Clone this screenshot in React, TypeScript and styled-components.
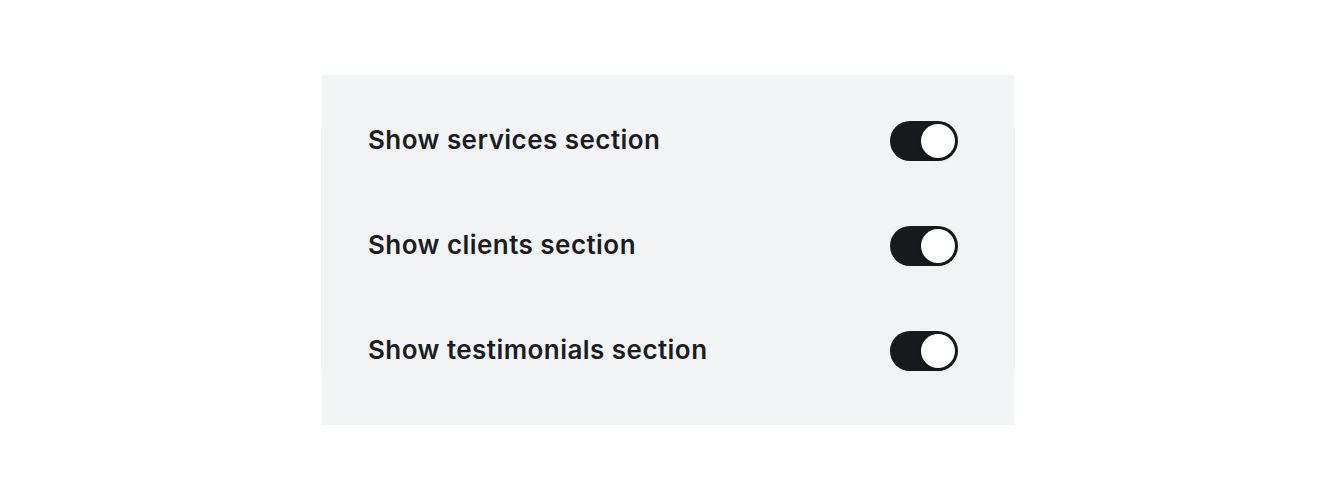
import React, { useState } from 'react'
import styled, { createGlobalStyle } from 'styled-components';

const GlobalStyle = createGlobalStyle`
    body {
        margin: 0;
        background: #ffffff;
        font-family: Inter, "Noto Sans", "Liberation Sans", sans-serif;
    }
`;

type Setting = {
    id: string
    label: string
}

const settings: Setting[] = [
    { id: 'services', label: 'Show services section' },
    { id: 'clients', label: 'Show clients section' },
    { id: 'testimonials', label: 'Show testimonials section' },
]

const App: React.FC = () => {
    const [values, setValues] = useState<Record<string, boolean>>({
        services: true,
        clients: true,
        testimonials: true,
    })

    const toggle = (id: string) =>
        setValues(v => ({ ...v, [id]: !v[id] }))

    return (
        <>
            <GlobalStyle />
            <Panel>
                <List>
                    {settings.map(s => (
                        <Row key={s.id}>
                            <Label>{s.label}</Label>
                            <Switch
                                role="switch"
                                aria-checked={values[s.id]}
                                $on={values[s.id]}
                                onClick={() => toggle(s.id)}
                            >
                                <Knob $on={values[s.id]} />
                            </Switch>
                        </Row>
                    ))}
                </List>
            </Panel>
        </>
    )
}

export default App

const Panel = styled.div`
    width: 692px;
    margin: 75px auto 0;
    padding: 53px 0;
    background: #f2f3f5;
`;

const List = styled.div`
    display: flex;
    flex-direction: column;
    gap: 65px;
    margin: 0 -1px;
    background: #f2f3f5;
    > :first-child {
        margin-top: -7px;
    }
    > :last-child {
        margin-bottom: 1px;
    }
`;

const Row = styled.div`
    display: flex;
    align-items: center;
    justify-content: space-between;
    height: 40px;
    padding: 0 57px 0 47px;
`;

const Label = styled.span`
    font-size: 26px;
    font-weight: 600;
    line-height: 1;
    margin-top: -2px;
    letter-spacing: 0.45px;
    color: #1b1c1f;
`;

const Switch = styled.button<{ $on: boolean }>`
    position: relative;
    width: 68px;
    height: 40px;
    padding: 0;
    border: none;
    border-radius: 20px;
    background: ${p => (p.$on ? '#18191c' : '#c9ccd1')};
    cursor: pointer;
`;

const Knob = styled.span<{ $on: boolean }>`
    position: absolute;
    top: 3px;
    left: ${p => (p.$on ? '31px' : '3px')};
    width: 34px;
    height: 34px;
    border-radius: 50%;
    background: #ffffff;
    box-shadow: 0 2px 4px rgba(0, 0, 0, 0.12);
    transition: left 0.15s ease;
`;
